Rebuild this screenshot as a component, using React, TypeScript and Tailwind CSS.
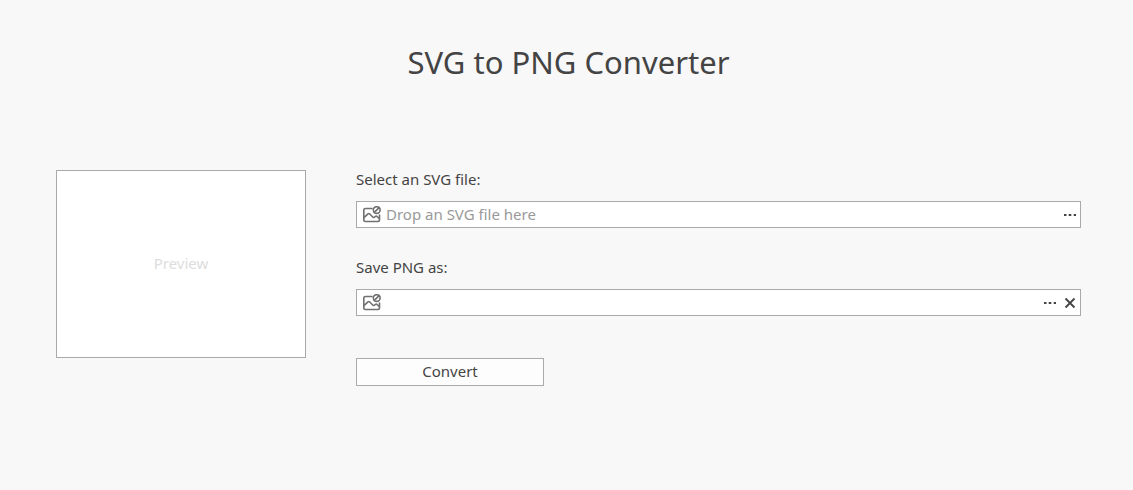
import { useRef, useState } from "react";
import type { DragEvent } from "react";

function ImageIcon() {
  return (
    <svg className="ml-1.5 size-[18px] shrink-0" viewBox="0 0 18 18" fill="none" stroke="#707070" strokeWidth="1.6" strokeLinejoin="round" strokeLinecap="round" aria-hidden="true">
      <path d="M9 2.5H2.5A1.7 1.7 0 0 0 .8 4.2v9.6a1.7 1.7 0 0 0 1.7 1.7h12.3a1.7 1.7 0 0 0 1.7-1.7V9" />
      <path d="M1.2 11.4 5 7.8c.5-.4 1-.4 1.5 0l3.4 3.4c.5.4 1 .4 1.5 0l1-.9c.5-.4 1-.4 1.5 0l2.4 2.2" />
      <circle cx="13.7" cy="4" r="3.4" />
      <path d="M11.3 6.4 16.1 1.6" />
    </svg>
  );
}

function DotsIcon() {
  return (
    <svg className="h-2 w-3.5" viewBox="0 0 14 8" fill="#444" aria-hidden="true">
      <path d="M1 3h2.5v2H1zM5.7 3h2.6v2H5.7zM10.7 3h2.3v2h-2.3z" />
    </svg>
  );
}

function CloseIcon() {
  return (
    <svg className="size-3" viewBox="0 0 12 12" stroke="#444" strokeWidth="1.8" aria-hidden="true">
      <path d="m1.5 1.5 9 9M10.5 1.5l-9 9" />
    </svg>
  );
}

export default function App() {
  const [source, setSource] = useState("");
  const [target, setTarget] = useState("");
  const picker = useRef<HTMLInputElement>(null);

  const drop = (event: DragEvent) => {
    event.preventDefault();
    setSource(event.dataTransfer.files[0]?.name ?? "");
  };

  return (
    <main className="min-h-screen bg-[#f8f8f8] px-[52px] pt-10 pb-12 font-['Noto_Sans','Open_Sans',sans-serif] text-[15px] text-[#444]">
      <h1 className="pl-1 text-center text-[31px] leading-[44px]">SVG to PNG Converter</h1>
      <div className="mt-[86px] flex items-start gap-[50px] pl-1">
        <div className="flex h-[188px] w-[250px] shrink-0 items-center justify-center border border-[#aaa] bg-white pb-0.5 text-[#ddd]">Preview</div>
        <form className="min-w-0 flex-1" onSubmit={(event) => event.preventDefault()}>
          <label htmlFor="source" className="block leading-[18px]">Select an SVG file:</label>
          <div className="mt-[13px] flex h-[27px] items-center border border-[#aaa] bg-white" onDrop={drop} onDragOver={(event) => event.preventDefault()}>
            <ImageIcon />
            <input id="source" value={source} onChange={(event) => setSource(event.target.value)} placeholder="Drop an SVG file here" className="min-w-0 flex-1 pl-[5px] outline-none placeholder:text-[#999]" />
            <button type="button" aria-label="Browse for an SVG file" className="px-[3px]" onClick={() => picker.current?.click()}><DotsIcon /></button>
            <input ref={picker} type="file" accept=".svg" hidden onChange={(event) => setSource(event.target.files?.[0]?.name ?? "")} />
          </div>
          <label htmlFor="target" className="mt-[30px] block leading-[18px]">Save PNG as:</label>
          <div className="mt-[13px] flex h-[27px] items-center border border-[#aaa] bg-white">
            <ImageIcon />
            <input id="target" value={target} onChange={(event) => setTarget(event.target.value)} className="min-w-0 flex-1 pl-[5px] outline-none" />
            <button type="button" aria-label="Choose where to save" className="px-[3px]" onClick={() => setTarget("image.png")}><DotsIcon /></button>
            <button type="button" aria-label="Clear" className="px-1" onClick={() => setTarget("")}><CloseIcon /></button>
          </div>
          <button type="submit" className="mt-[42px] flex h-7 w-[188px] items-center justify-center border border-[#aaa] bg-[#fdfdfd] pb-0.5">Convert</button>
        </form>
      </div>
    </main>
  );
}
